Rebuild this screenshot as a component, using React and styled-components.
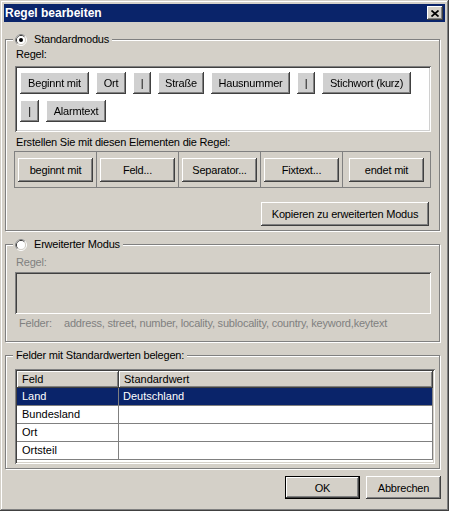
import React from 'react';
import styled, { createGlobalStyle } from 'styled-components';

const GlobalStyle = createGlobalStyle`
  html, body {
    margin: 0;
    padding: 0;
    background: #d4d0c8;
  }
  body {
    font-family: "Liberation Sans", Arial, sans-serif;
    font-size: 11px;
    color: #000;
  }
`;

const raised = `
  box-shadow: inset -1px -1px #404040, inset 1px 1px #fff,
    inset -2px -2px #808080, inset 2px 2px #d4d0c8;
`;

const sunken = `
  box-shadow: inset 1px 1px #808080, inset -1px -1px #fff,
    inset 2px 2px #404040, inset -2px -2px #d4d0c8;
`;

const chips = [
  { label: 'Beginnt mit', width: 69 },
  { label: 'Ort', width: 30 },
  { label: '|', width: 18 },
  { label: 'Straße', width: 46 },
  { label: 'Hausnummer', width: 79 },
  { label: '|', width: 18 },
  { label: 'Stichwort (kurz)', width: 89 },
  { label: '|', width: 19 },
  { label: 'Alarmtext', width: 60 },
];

const elements = ['beginnt mit', 'Feld...', 'Separator...', 'Fixtext...', 'endet mit'];

const rows = [
  { field: 'Land', value: 'Deutschland', selected: true },
  { field: 'Bundesland', value: '' },
  { field: 'Ort', value: '' },
  { field: 'Ortsteil', value: '' },
];

function Radio({ checked }) {
  return (
    <svg width="12" height="12" viewBox="0 0 12 12">
      <circle cx="6" cy="6" r="5.5" fill="none" stroke="#fff" />
      <path d="M2.11 9.89 A5.5 5.5 0 0 1 9.89 2.11" fill="none" stroke="#808080" />
      <circle cx="6" cy="6" r="4.5" fill="none" stroke="#d4d0c8" />
      <path d="M2.82 9.18 A4.5 4.5 0 0 1 9.18 2.82" fill="none" stroke="#404040" />
      <circle cx="6" cy="6" r="4" fill="#fff" />
      {checked && <circle cx="6" cy="6" r="2" fill="#000" />}
    </svg>
  );
}

function App() {
  return (
    <>
      <GlobalStyle />
      <Window>
        <TitleBar>
          <span>Regel bearbeiten</span>
          <CloseButton>
            <svg width="8" height="7" viewBox="0 0 8 7">
              <path d="M0.5 0.5 L7.5 6.5 M7.5 0.5 L0.5 6.5" stroke="#000" strokeWidth="1.7" />
            </svg>
          </CloseButton>
        </TitleBar>
        <Body>
          <Group $top={11}>
            <Legend>
              <Radio checked />
              <span>Standardmodus</span>
            </Legend>
            <GroupInner $pad="2px 8px 4px 9px">
              <Label>Regel:</Label>
              <RuleBox>
                {chips.map((c, i) => (
                  <Button key={i} $w={c.width} $h={22}>{c.label}</Button>
                ))}
              </RuleBox>
              <Label $top={4}>Erstellen Sie mit diesen Elementen die Regel:</Label>
              <ElementGrid>
                {elements.map((e) => (
                  <ElementCell key={e}>
                    <Button $w={75} $h={24}>{e}</Button>
                  </ElementCell>
                ))}
              </ElementGrid>
              <CopyRow>
                <Button $w={168} $h={24}>Kopieren zu erweiterten Modus</Button>
              </CopyRow>
            </GroupInner>
          </Group>

          <Group $top={7}>
            <Legend>
              <Radio />
              <span>Erweiterter Modus</span>
            </Legend>
            <GroupInner $pad="5px 8px 11px 9px">
              <Label $disabled>Regel:</Label>
              <DisabledField />
              <FieldsLine>
                <FieldsLabel>Felder:</FieldsLabel>
                <span>address, street, number, locality, sublocality, country, keyword,keytext</span>
              </FieldsLine>
            </GroupInner>
          </Group>

          <Group $top={7}>
            <Legend $plain>Felder mit Standardwerten belegen:</Legend>
            <GroupInner $pad="7px 4px 4px 9px">
              <ListView>
                <ListHeader>
                  <HeaderCell>Feld</HeaderCell>
                  <HeaderCell>Standardwert</HeaderCell>
                </ListHeader>
                {rows.map((r) => (
                  <ListRow key={r.field} $selected={r.selected}>
                    <ListCell $pad={5}>{r.field}</ListCell>
                    <ListCell $pad={4}>{r.value}</ListCell>
                  </ListRow>
                ))}
              </ListView>
            </GroupInner>
          </Group>

          <DialogButtons>
            <Button $w={75} $h={23} $default>OK</Button>
            <Button $w={75} $h={23}>Abbrechen</Button>
          </DialogButtons>
        </Body>
      </Window>
    </>
  );
}

export default App;

const Window = styled.div`
  width: 449px;
  height: 511px;
  box-sizing: border-box;
  padding: 4px;
  display: flex;
  flex-direction: column;
  background: #d4d0c8;
  box-shadow: inset -1px -1px #404040, inset 1px 1px #d4d0c8,
    inset -2px -2px #808080, inset 2px 2px #fff;
`;

const TitleBar = styled.div`
  height: 18px;
  flex-shrink: 0;
  display: flex;
  align-items: center;
  justify-content: space-between;
  padding: 0 2px 0 1px;
  background: #0a246a;
  color: #fff;
  font-weight: bold;
  font-size: 12px;
  line-height: 18px;
`;

const CloseButton = styled.div`
  width: 16px;
  height: 14px;
  display: flex;
  align-items: center;
  justify-content: center;
  background: #d4d0c8;
  ${raised}
`;

const Body = styled.div`
  flex: 1;
  display: flex;
  flex-direction: column;
  padding: 0 5px 0 1px;
  letter-spacing: -0.2px;
`;

const Group = styled.fieldset`
  margin: ${(p) => p.$top}px 0 0;
  padding: 0;
  min-width: 0;
  border: 1px solid #808080;
  box-shadow: inset 1px 1px #fff, 1px 1px #fff;
`;

const Legend = styled.legend`
  margin-left: 7px;
  padding: ${(p) => (p.$plain ? '0 3px 0 3px' : '0 3px 0 2px')};
  height: 13px;
  line-height: 13px;
  display: flex;
  align-items: center;
  gap: 7px;
  background: #d4d0c8;
`;

const GroupInner = styled.div`
  display: flex;
  flex-direction: column;
  padding: ${(p) => p.$pad};
`;

const Label = styled.div`
  margin: ${(p) => p.$top || 0}px 0 0 1px;
  line-height: 13px;
  color: ${(p) => (p.$disabled ? '#808080' : '#000')};
`;

const Button = styled.div`
  width: ${(p) => p.$w}px;
  height: ${(p) => p.$h}px;
  box-sizing: border-box;
  flex-shrink: 0;
  display: flex;
  align-items: center;
  justify-content: center;
  background: #d4d0c8;
  white-space: nowrap;
  ${(p) =>
    p.$default
      ? `box-shadow: inset 0 0 0 1px #000, inset -2px -2px #404040, inset 2px 2px #fff, inset -3px -3px #808080;`
      : raised}
`;

const RuleBox = styled.div`
  margin-top: 5px;
  height: 66px;
  box-sizing: border-box;
  padding: 6px 5px;
  display: flex;
  flex-wrap: wrap;
  align-content: flex-start;
  gap: 6px 7px;
  background: #fff;
  filter: grayscale(1);
  ${sunken}
`;

const ElementGrid = styled.div`
  margin: 2px 0 0 -1px;
  height: 37px;
  box-sizing: border-box;
  border: 1px solid #808080;
  display: grid;
  grid-template-columns: 81px 82px 82px 82px 1fr;
`;

const ElementCell = styled.div`
  display: flex;
  align-items: center;
  justify-content: center;
  & + & {
    border-left: 1px solid #808080;
  }
`;

const CopyRow = styled.div`
  margin-top: 14px;
  padding-right: 2px;
  display: flex;
  justify-content: flex-end;
`;

const DisabledField = styled.div`
  margin-top: 3px;
  height: 42px;
  background: #d4d0c8;
  ${sunken}
`;

const FieldsLine = styled.div`
  margin-top: 3px;
  padding-left: 4px;
  display: flex;
  line-height: 13px;
  color: #808080;
  white-space: nowrap;
`;

const FieldsLabel = styled.span`
  width: 45px;
`;

const ListView = styled.div`
  height: 95px;
  box-sizing: border-box;
  padding: 2px;
  background: #fff;
  letter-spacing: 0;
  ${sunken}
`;

const ListHeader = styled.div`
  display: grid;
  grid-template-columns: 102px 1fr;
  height: 17px;
`;

const HeaderCell = styled.div`
  padding-left: 5px;
  line-height: 17px;
  background: #d4d0c8;
  ${raised}
`;

const ListRow = styled.div`
  display: grid;
  grid-template-columns: 102px 1fr;
  height: 18px;
  box-sizing: border-box;
  border-bottom: 1px solid #808080;
  background: ${(p) => (p.$selected ? '#0a246a' : '#fff')};
  color: ${(p) => (p.$selected ? '#fff' : '#000')};
`;

const ListCell = styled.div`
  padding-left: ${(p) => p.$pad}px;
  line-height: 17px;
  border-right: 1px solid #808080;
`;

const DialogButtons = styled.div`
  margin: 7px -1px 0 0;
  display: flex;
  justify-content: flex-end;
  gap: 6px;
`;
